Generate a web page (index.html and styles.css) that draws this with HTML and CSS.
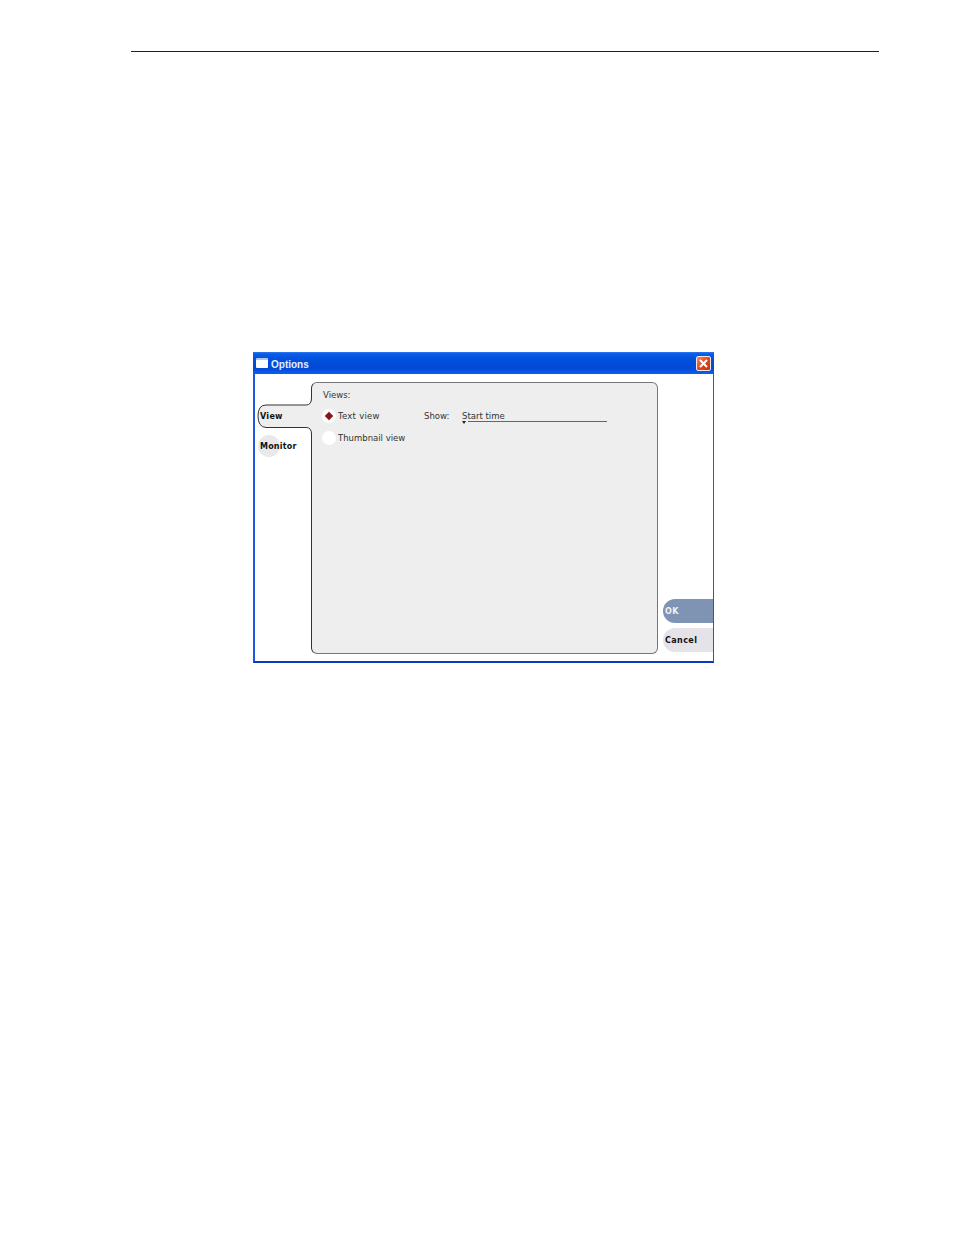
FILE: index.html
```html
<!DOCTYPE html>
<html lang="en">
<head>
    <meta charset="UTF-8">
    <title>Options</title>
    <link rel="stylesheet" href="styles.css">
</head>
<body>
    <div class="page-rule"></div>

    <div class="window">
        <div class="titlebar">
            <span class="title-icon"></span>
            <span class="title-text">Options</span>
            <span class="close-btn">
                <svg width="11" height="11" viewBox="0 0 11 11"><path d="M2 2 9 9M9 2 2 9" stroke="#fff" stroke-width="2" fill="none"/></svg>
            </span>
        </div>

        <div class="window-body">
            <div class="tabs">
                <div class="tab tab-active">
                    <svg class="tab-shape" width="57" height="38" viewBox="0 0 57 38">
                        <path d="M57 0H54.5Q54.5 7 49 7H9Q1 7 1 18T9 29.5H49Q54.5 29.5 54.5 36V38H57Z" fill="#eeeeee"/>
                        <path d="M54.5 0Q54.5 7 49 7H9Q1 7 1 18T9 29.5H49Q54.5 29.5 54.5 36V38" fill="none" stroke="#333" stroke-width="1"/>
                    </svg>
                    <span class="tab-label">View</span>
                </div>
                <div class="tab tab-idle">
                    <span class="tab-label">Monitor</span>
                </div>
            </div>

            <div class="panel">
                <div class="views-title">Views:</div>
                <div class="view-row">
                    <span class="radio radio-on"></span>
                    <span class="radio-label label-wide">Text view</span>
                    <span class="show-label">Show:</span>
                    <div class="dropdown">
                        <span class="dropdown-value">Start time</span>
                        <span class="dropdown-line"><span class="dropdown-arrow"></span></span>
                    </div>
                </div>
                <div class="view-row">
                    <span class="radio"></span>
                    <span class="radio-label">Thumbnail view</span>
                </div>
            </div>

            <div class="actions">
                <div class="action action-ok">OK</div>
                <div class="action action-cancel">Cancel</div>
            </div>
        </div>
    </div>
</body>
</html>
```

FILE: styles.css
```css
* {
    margin: 0;
    padding: 0;
    box-sizing: border-box;
    font-family: "DejaVu Sans", sans-serif;
}

body {
    background-color: #fff;
    height: 1235px;
    overflow: hidden;
    padding-top: 51px;
}

.page-rule {
    width: 748px;
    height: 1px;
    margin-left: 131px;
    background-color: #222;
}

.window {
    width: 461px;
    height: 311px;
    margin: 300px 0 0 253px;
    display: flex;
    flex-direction: column;
    background: #fff;
    border-left: 2px solid #1f56e0;
    border-right: 1px solid #1f56e0;
    border-bottom: 2px solid #0a37c4;
}

.titlebar {
    height: 22px;
    margin: 0 -1px 0 -2px;
    padding: 0 3px;
    display: flex;
    align-items: center;
    background: linear-gradient(#2b78ee 0, #0a5be4 2px, #0050dc 8px, #0049d6 16px, #0a5cec 21px, #0a5cec 100%);
}

.title-icon {
    width: 12px;
    height: 10px;
    background: #fff;
    border-top: 2px solid #a9c8f5;
    border-radius: 1px;
}

.title-text {
    margin-left: 3px;
    padding-top: 2px;
    color: #e6eeff;
    font-family: "Liberation Sans", sans-serif;
    font-size: 10px;
    font-weight: bold;
}

.close-btn {
    margin-left: auto;
    width: 15px;
    height: 15px;
    display: flex;
    align-items: center;
    justify-content: center;
    background: linear-gradient(135deg, #ef8a66, #d9481f 55%, #c23512);
    border: 1px solid #f4e6e0;
    border-radius: 2px;
}

.window-body {
    flex: 1;
    display: flex;
    min-height: 0;
}

.tabs {
    width: 56px;
    flex-shrink: 0;
    padding-top: 24px;
}

.tab {
    position: relative;
    font-size: 8px;
    font-weight: bold;
    letter-spacing: 0.2px;
    color: #111;
}

.tab-active {
    height: 38px;
    width: 57px;
    margin-left: 2px;
    z-index: 1;
}

.tab-shape {
    position: absolute;
    left: 0;
    top: 0;
}

.tab-active .tab-label {
    position: absolute;
    left: 3px;
    top: 14px;
    letter-spacing: 0.3px;
}

.tab-idle {
    height: 22px;
    margin: -1px 0 0 3px;
    padding: 7px 0 0 2px;
}

.tab-idle::before {
    content: "";
    position: absolute;
    left: 0;
    top: 0;
    width: 22px;
    height: 22px;
    border-radius: 50%;
    background: #e9e9e9;
}

.tab-idle .tab-label {
    position: relative;
}

.panel {
    width: 347px;
    height: 272px;
    margin-top: 8px;
    padding: 6px 0 0 10px;
    background: #eeeeee;
    border: 1px solid #777;
    border-left-color: #333;
    border-radius: 6px;
    font-size: 8.5px;
    color: #333;
}

.views-title {
    height: 12px;
    line-height: 12px;
    margin-bottom: 8px;
    padding-left: 1px;
}

.view-row {
    height: 14px;
    margin-bottom: 8px;
    display: flex;
    align-items: center;
}

.radio {
    position: relative;
    width: 14px;
    height: 14px;
    flex-shrink: 0;
    border-radius: 50%;
    background: #fff;
}

.radio-on::after {
    content: "";
    position: absolute;
    left: 4px;
    top: 4px;
    width: 6px;
    height: 6px;
    background: #8a1616;
    transform: rotate(45deg);
}

.radio-label {
    margin-left: 2px;
    width: 86px;
}

.label-wide {
    letter-spacing: 0.25px;
}

.show-label {
    width: 38px;
}

.dropdown {
    position: relative;
    width: 145px;
    height: 14px;
}

.dropdown-value {
    line-height: 14px;
}

.dropdown-line {
    position: absolute;
    left: 6px;
    right: 0;
    top: 12px;
    height: 1px;
    background: #666;
}

.dropdown-arrow {
    position: absolute;
    left: -6px;
    top: 0;
    border-left: 2.5px solid transparent;
    border-right: 2.5px solid transparent;
    border-top: 3px solid #222;
}

.actions {
    flex: 1;
    padding: 225px 0 0 5px;
    display: flex;
    flex-direction: column;
    gap: 5px;
}

.action {
    height: 24px;
    line-height: 26px;
    padding-left: 2px;
    border-radius: 12px 0 0 12px;
    font-size: 8px;
    font-weight: bold;
    letter-spacing: 0.4px;
}

.action-ok {
    background: #7f93b3;
    color: #f0f3f8;
}

.action-cancel {
    background: #e6e3e8;
    color: #111;
}
```
